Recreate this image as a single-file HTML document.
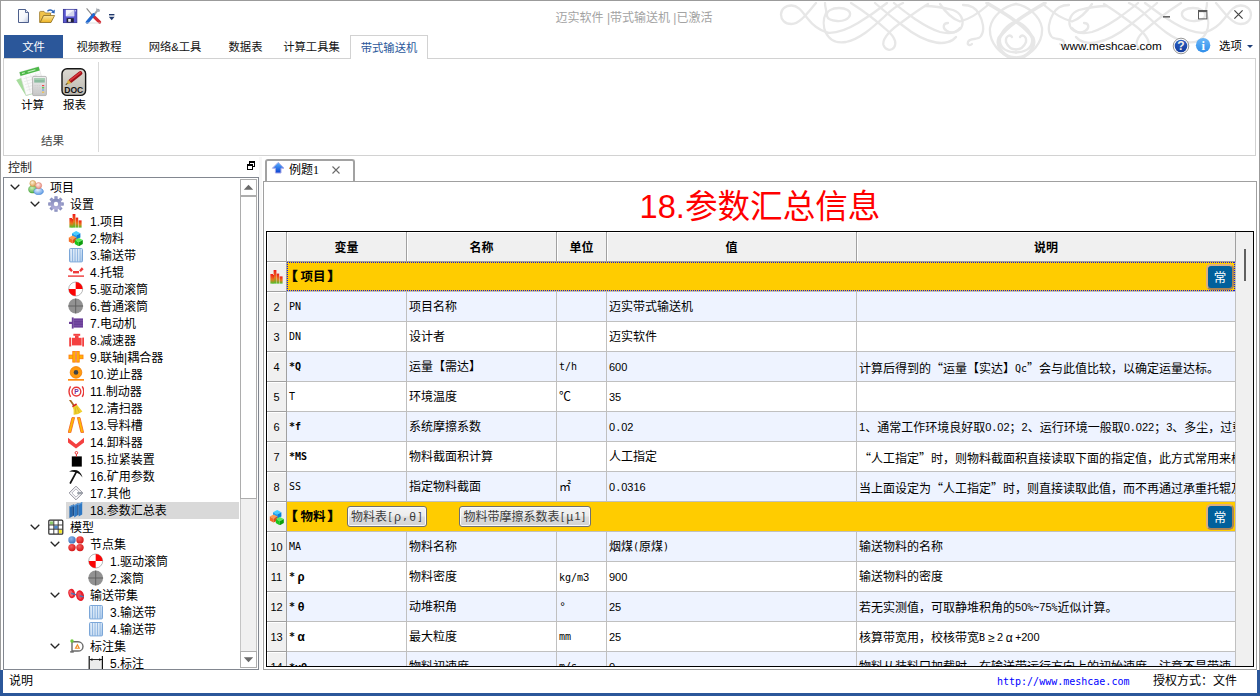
<!DOCTYPE html>
<html lang="zh-CN"><head><meta charset="utf-8"><title>迈实软件 |带式输送机 |已激活</title>
<style>
*{box-sizing:border-box;margin:0;padding:0}
html,body{width:1260px;height:696px;overflow:hidden;background:#fff}
body{position:relative;font-family:"Liberation Sans","Noto Sans CJK SC",sans-serif;font-size:12px;color:#000;line-height:1}
.abs{position:absolute}
.t{position:absolute;white-space:nowrap;line-height:16px;height:16px}
#win{position:absolute;left:0;top:0;width:1260px;height:696px;border:1px solid #9b9b9b;}
#title{left:4px;width:1260px;top:10px;text-align:center;color:#a3a3a3;font-size:12px}
.tab{position:absolute;top:35px;height:24px;line-height:25px;text-align:center;font-size:11.3px;color:#111;white-space:nowrap}
#filetab{left:4px;width:59px;top:35px;height:23px;background:#2b579a;color:#fff}
#acttab{left:350px;width:78px;top:35px;height:24px;border:1px solid #d2d2d2;border-bottom:none;background:#fff;color:#2b579a;z-index:3}
#ribbon{left:3px;top:58px;width:1253px;height:98px;border:1px solid #d2d2d2;background:#fff}
#ribsep{left:98px;top:62px;width:1px;height:90px;background:#d9d9d9}
#tree{left:3px;top:177px;width:256px;height:493px;border:1px solid #828790;background:#fff;overflow:hidden}
.row{position:absolute;left:0;height:17px;line-height:16px;white-space:nowrap;font-size:12px}
.row .tx{position:absolute;top:1px}
.chev{position:absolute;width:10px;height:6px}
.ic{position:absolute;width:16px;height:16px}
#sel{left:62px;top:324px;width:173px;height:17px;background:#d9d9d9}
#vsb{left:236px;top:1px;width:17px;height:489px;background:#fff}
.sbb{position:absolute;left:0;width:17px;height:17px;background:#fff;border:1px solid #adadad}
#splitter{left:259px;top:157px;width:3px;height:513px;background:#f7f7f7}
#doctab{left:265px;top:159px;width:90px;height:22px;border:2px solid #a2a2a2;border-bottom:none;background:#fff;border-radius:3px 3px 0 0;z-index:2}
#docpane{left:263px;top:181px;width:994px;height:489px;border:1px solid #a0a0a0;background:#fff}
#bigtitle{left:263px;width:994px;top:187px;height:40px;line-height:40px;text-align:center;font-size:32.6px;color:#ff0000;white-space:nowrap}
#grid{left:266px;top:231px;width:988px;height:436px;border:1px solid #000;background:#f0f0f0;overflow:hidden}
.cell{position:absolute;height:30px;line-height:32px;border-right:1px solid #c0c0c0;border-bottom:1px solid #c0c0c0;white-space:nowrap;overflow:hidden;font-family:"Liberation Mono","Noto Sans CJK SC",monospace;font-size:12px;padding-left:2px;color:#000}
.hd{background:#f0f0f0;text-align:center;font-weight:bold;line-height:34px;box-shadow:inset 1px 1px 0 #fff;border-right:1px solid #a0a0a0;border-bottom:1px solid #a0a0a0;padding-left:0}
.rn{background:#f0f0f0;text-align:center;padding-left:0;box-shadow:inset 1px 1px 0 #fff;border-right:1px solid #a0a0a0;border-bottom:1px solid #a0a0a0;font-size:12px}
.alt{background:#eef3ff}
.wh{background:#fff}
.yl{position:absolute;height:30px;background:#ffcc00;left:20px;width:949px;border-bottom:1px solid #c0c0c0;border-right:1px solid #c0c0c0}
.l{font-family:"DejaVu Sans Mono","Liberation Mono",monospace;font-size:10px;position:relative;top:-1px}
.d{font-family:"Liberation Sans",sans-serif;font-size:11px;position:relative;top:-1px}
.db{font-family:"Liberation Sans",sans-serif;font-size:11px;font-weight:bold;position:relative;top:-1px}
.q{font-family:"Noto Sans CJK SC",sans-serif;font-feature-settings:"fwid"}
.g{display:inline-block;width:12px;text-align:center}
.btn .g{width:9px}
.lb{font-family:"DejaVu Sans Mono","Liberation Mono",monospace;font-size:10px;font-weight:bold;position:relative;top:-1px}
.btn .l{letter-spacing:0}
.btn{position:absolute;height:21px;line-height:21px;border:1px solid #707070;border-radius:3px;background:linear-gradient(#f4f4f4 0%,#ececec 48%,#dedede 52%,#d2d2d2 100%);font-family:"Liberation Mono","Noto Sans CJK SC",monospace;font-size:12px;color:#3c3c3c;padding:0;text-align:center;white-space:nowrap;box-shadow:inset 0 0 0 1px #fafafa}
.chang{position:absolute;left:939px;width:28px;height:26px;border:2px solid;border-color:#dcae80 #a88458 #a88458 #dcae80;border-radius:5px;background:#00609c;color:#fff;text-align:center;line-height:24px;font-size:12.5px;font-family:"Liberation Sans","Noto Sans CJK SC",sans-serif}
.foc{background:repeating-linear-gradient(90deg,#1414e6 0 1px,transparent 1px 2px) 0 0/100% 1px no-repeat,repeating-linear-gradient(90deg,#1414e6 0 1px,transparent 1px 2px) 0 100%/100% 1px no-repeat,repeating-linear-gradient(0deg,#1414e6 0 1px,transparent 1px 2px) 0 0/1px 100% no-repeat,repeating-linear-gradient(0deg,#1414e6 0 1px,transparent 1px 2px) 100% 0/1px 100% no-repeat}
#status{left:0;top:670px;width:1260px;height:26px;border:3px solid #2b579a;border-top:none;background:#fff}
</style></head>
<body>

<svg width="0" height="0" style="position:absolute"><defs>
<linearGradient id="gBars" x1="0" y1="0" x2="0" y2="1"><stop offset="0" stop-color="#f01818"/><stop offset=".55" stop-color="#e8781c"/><stop offset="1" stop-color="#4fc02a"/></linearGradient>
<linearGradient id="gGear" x1="0" y1="0" x2="0" y2="1"><stop offset="0" stop-color="#8088b8"/><stop offset="1" stop-color="#b4b0dc"/></linearGradient>
<linearGradient id="gBelt" x1="0" y1="0" x2="0" y2="1"><stop offset="0" stop-color="#d4e4f6"/><stop offset="1" stop-color="#a8c8ea"/></linearGradient>
<linearGradient id="gFold" x1="0" y1="0" x2="0" y2="1"><stop offset="0" stop-color="#fbe7a0"/><stop offset="1" stop-color="#eeb21e"/></linearGradient>
<linearGradient id="gPage" x1="0" y1="0" x2="1" y2="1"><stop offset="0" stop-color="#ffffff"/><stop offset=".6" stop-color="#f4f6fb"/><stop offset="1" stop-color="#b9c4dc"/></linearGradient>
<linearGradient id="gInfo" x1="0" y1="0" x2="0" y2="1"><stop offset="0" stop-color="#6ab6f8"/><stop offset="1" stop-color="#2f8eea"/></linearGradient>
<linearGradient id="gHelp" x1="0" y1="0" x2="0" y2="1"><stop offset="0" stop-color="#2a60c4"/><stop offset="1" stop-color="#143c9c"/></linearGradient>
<linearGradient id="gUp" x1="0" y1="0" x2="0" y2="1"><stop offset="0" stop-color="#5ab4ff"/><stop offset="1" stop-color="#0a3fd0"/></linearGradient>
<linearGradient id="gDoc" x1="0" y1="0" x2="0" y2="1"><stop offset="0" stop-color="#dcd9d2"/><stop offset="1" stop-color="#bdb9b0"/></linearGradient>
<linearGradient id="gCalc" x1="0" y1="0" x2="0" y2="1"><stop offset="0" stop-color="#f0f0f0"/><stop offset="1" stop-color="#c4c4c4"/></linearGradient>
<radialGradient id="gHeadA" cx=".4" cy=".35" r=".7"><stop offset="0" stop-color="#fdf0d8"/><stop offset="1" stop-color="#d8a050"/></radialGradient>
<radialGradient id="gHeadB" cx=".4" cy=".35" r=".7"><stop offset="0" stop-color="#fff0ec"/><stop offset="1" stop-color="#e88878"/></radialGradient>
<radialGradient id="gBodyA" cx=".4" cy=".3" r=".8"><stop offset="0" stop-color="#c8f0b8"/><stop offset="1" stop-color="#48a838"/></radialGradient>
<radialGradient id="gBodyB" cx=".4" cy=".3" r=".8"><stop offset="0" stop-color="#e4f0ff"/><stop offset="1" stop-color="#4a8ee0"/></radialGradient>
<radialGradient id="gRed" cx=".4" cy=".35" r=".7"><stop offset="0" stop-color="#f86060"/><stop offset="1" stop-color="#d01010"/></radialGradient>
<radialGradient id="gBlu" cx=".4" cy=".35" r=".7"><stop offset="0" stop-color="#8ab4e8"/><stop offset="1" stop-color="#3a70b8"/></radialGradient>
</defs></svg>
<div id="win"></div>
<svg class="abs" style="left:770px;top:2px" width="488" height="56" viewBox="770 2 488 56"><g fill="none" stroke="#e7e7e7" stroke-width="2.3" stroke-linecap="round"><g><path d="M816 3C808 12 800 24 791.5 24C784.5 24 781 19.5 781 14.5C781 9.5 785 5.5 791.5 5.5C799 5.5 803 13 808 19C813 25.5 819 30 827 32.5"/><path d="M825 3C825 8 827 11 826 13C823 19 823 27 826 33C830 41 838 43.5 846 42C860 39 872 28 884 17C890 11 896 6 903 3"/><path d="M827 16C826 11 832 8 839 8C846 8 851 11 850 15C849 19 843 21.5 837 21C831 20.5 827.500 19 827 16Z"/><path d="M826 32.5C836 34 848 29 858 23C868 17 878 10 887 3"/><path d="M851 3C862 10 878 22 889 32C894 37 897 43 894 47.5C891 51.5 885 50 883.5 45C882 39 890 30 902 22C910 16 920 9 928 4"/><path d="M875 3C883 10 893 18 902 25C910 31.5 922 40 936 42.5C944 44 952 42 956 37"/><path d="M894 3C901 9 908 14 915 19C921 23 930 29 940 32C948 34 956 33 960 28"/><path d="M925 6C935 6 945 8 953 10C961 13 964 20 962 26C960 32 952 34 947 31C942 28 943 23 948 23"/><path d="M963 5C970 5 976 8 979 14C983 21 985 30 981 36C978 41 970 37 968 42C967 45 970 46 972 44"/><path d="M940 4C944 10 950 18 960 21.5C970 19 980 12 988 5"/><path d="M1016 4C1004 6 992 16 990 28C989 42 1000 57 1016 57.5"/><path d="M1016 21C1006 25 999 34 1000 42C1001 49 1008 52.5 1016 52.5"/><path d="M1006 42C1005 36 1010 34 1012 37"/><path d="M1006 42C1008 47 1012 49.5 1016 49.5"/><path d="M987 3C1000 11 1024 24 1033 38C1036 46 1030 54 1022 57.5" stroke-width="3.4"/></g><g transform="translate(2032 0) scale(-1 1)"><path d="M816 3C808 12 800 24 791.5 24C784.5 24 781 19.5 781 14.5C781 9.5 785 5.5 791.5 5.5C799 5.5 803 13 808 19C813 25.5 819 30 827 32.5"/><path d="M825 3C825 8 827 11 826 13C823 19 823 27 826 33C830 41 838 43.5 846 42C860 39 872 28 884 17C890 11 896 6 903 3"/><path d="M827 16C826 11 832 8 839 8C846 8 851 11 850 15C849 19 843 21.5 837 21C831 20.5 827.500 19 827 16Z"/><path d="M826 32.5C836 34 848 29 858 23C868 17 878 10 887 3"/><path d="M851 3C862 10 878 22 889 32C894 37 897 43 894 47.5C891 51.5 885 50 883.5 45C882 39 890 30 902 22C910 16 920 9 928 4"/><path d="M875 3C883 10 893 18 902 25C910 31.5 922 40 936 42.5C944 44 952 42 956 37"/><path d="M894 3C901 9 908 14 915 19C921 23 930 29 940 32C948 34 956 33 960 28"/><path d="M925 6C935 6 945 8 953 10C961 13 964 20 962 26C960 32 952 34 947 31C942 28 943 23 948 23"/><path d="M963 5C970 5 976 8 979 14C983 21 985 30 981 36C978 41 970 37 968 42C967 45 970 46 972 44"/><path d="M940 4C944 10 950 18 960 21.5C970 19 980 12 988 5"/><path d="M1016 4C1004 6 992 16 990 28C989 42 1000 57 1016 57.5"/><path d="M1016 21C1006 25 999 34 1000 42C1001 49 1008 52.5 1016 52.5"/><path d="M1006 42C1005 36 1010 34 1012 37"/><path d="M1006 42C1008 47 1012 49.5 1016 49.5"/><path d="M987 3C1000 11 1024 24 1033 38C1036 46 1030 54 1022 57.5" stroke-width="3.4"/></g></g></svg>
<svg class="abs" style="left:16px;top:6px" width="104" height="20" viewBox="16 6 104 20"><path d="M18.5 9.5 H25.5 L28.5 12.5 V22.5 H18.5Z" fill="url(#gPage)" stroke="#4d5f8c" stroke-width="1"/><path d="M25.5 9.5 V12.5 H28.5" fill="#dfe5f2" stroke="#4d5f8c" stroke-width=".9"/><path d="M39.6 22.4 V12.2 Q39.6 11.4 40.4 11.4 H44 L45.4 13 H50.6 V15.4 H43.6 L40.4 22.4Z" fill="#f1c34a" stroke="#9a7a2c" stroke-width=".8"/><path d="M40.2 22.5 L43.6 15.5 H54.6 L51 22.5Z" fill="url(#gFold)" stroke="#8c6c20" stroke-width=".8"/><path d="M47.4 11.2 Q50.6 8.6 53.4 11.6" fill="none" stroke="#2a62b8" stroke-width="1.3"/><path d="M54.8 9.6 L54.6 13.4 L51 12.4Z" fill="#2a62b8"/><rect x="63.4" y="9.4" width="13.4" height="13.2" fill="#5a58d0" stroke="#3a389c" stroke-width=".9"/><rect x="65.8" y="9.8" width="8.4" height="6.4" fill="#f4f4fb"/><path d="M65.8 16.2 L74.2 9.8 V16.2Z" fill="#d4d6ee"/><rect x="66.6" y="18.2" width="7.2" height="4.2" fill="#22223a"/><rect x="68.2" y="19" width="2.6" height="2.8" fill="#f0f0f0"/><rect x="75" y="10.2" width="1" height="1.2" fill="#d0d0f0"/><path d="M86.6 8.4 L93.4 16.6" stroke="#8a8a8a" stroke-width="1.1"/><path d="M92.6 15.4 L99.6 22.2" stroke="#d42c34" stroke-width="3.2" stroke-linecap="round"/><path d="M98.6 9 L94.6 14.2" stroke="#9aa0a8" stroke-width="2"/><path d="M96 7.6 L97.6 10 L100.2 9.6 L99.4 12 L96.4 11.6Z" fill="#aab0b8"/><path d="M93.6 14.8 L87.2 22.2" stroke="#1f68d0" stroke-width="3.2" stroke-linecap="round"/><path d="M86 23 H100.6" stroke="#d8d8d8" stroke-width=".8"/><rect x="109" y="14" width="5.4" height="1.4" fill="#20386c"/><path d="M108.8 16.8 H114.6 L111.7 20.2Z" fill="#20386c"/></svg>
<div class="t" id="title">迈实软件 |带式输送机 |已激活</div>
<svg class="abs" style="left:1155px;top:4px" width="100" height="24" viewBox="1155 4 100 24"><rect x="1163" y="16" width="7" height="1.6" fill="#666"/><rect x="1198.5" y="10.5" width="8.4" height="8.4" fill="none" stroke="#5a5a5a" stroke-width="1"/><rect x="1198.5" y="10.5" width="8.4" height="1.6" fill="#5a5a5a"/><path d="M1234.4 10.4 L1242.6 18.6 M1242.6 10.4 L1234.4 18.6" stroke="#444" stroke-width="1.2"/></svg>
<div class="tab" id="filetab">文件</div>
<div class="tab" style="left:66px;width:66px">视频教程</div>
<div class="tab" style="left:137px;width:76px">网络&amp;工具</div>
<div class="tab" style="left:218px;width:55px">数据表</div>
<div class="tab" style="left:273px;width:77px">计算工具集</div>
<div class="tab" id="acttab">带式输送机</div>
<div class="t" style="left:1061px;top:38px;font-size:11.7px;color:#000">www.meshcae.com</div>
<svg class="abs" style="left:1172px;top:37px" width="40" height="18" viewBox="1172 37 40 18"><circle cx="1181" cy="46" r="7.8" fill="#fff" stroke="#8a8a8a" stroke-width=".9"/><circle cx="1181" cy="46" r="6.3" fill="url(#gHelp)"/><text x="1181" y="50.4" text-anchor="middle" font-family="Liberation Sans,sans-serif" font-weight="bold" font-size="12" fill="#f4f0e6">?</text><circle cx="1203.1" cy="45.2" r="7.2" fill="url(#gInfo)"/><text x="1203.2" y="49.8" text-anchor="middle" font-family="Liberation Serif,serif" font-weight="bold" font-size="12.5" fill="#fff">i</text></svg>
<div class="t" style="left:1219px;top:38px;font-size:11.4px">选项</div>
<div class="abs" style="left:1247px;top:45px;width:0;height:0;border-left:3px solid transparent;border-right:3px solid transparent;border-top:3px solid #1e3e78"></div>
<div class="abs" id="ribbon"></div>
<div class="abs" id="ribsep"></div>
<svg class="abs" style="left:14px;top:64px" width="76" height="34" viewBox="14 64 76 34"><path d="M16.2 80 L27 75.4 L33.6 93.8 L26 96Z" fill="#a6dc9c"/><g transform="rotate(-16 30 80)"><rect x="22" y="69.6" width="20" height="24" fill="#fbfbfb" stroke="#d8d8d8" stroke-width=".5"/><rect x="22" y="69.6" width="20" height="4" fill="#4cb848"/><path d="M24 71.6h3M30 71.6h8" stroke="#c8f0c0" stroke-width="1"/><path d="M24 77h17M24 80h17M24 83h17M24 86h17M24 89h17M27 75v17M32 75v17M37 75v17" stroke="#e4e4e4" stroke-width=".6"/></g><rect x="32.6" y="76.4" width="13.8" height="19.2" rx="1.2" fill="url(#gCalc)" stroke="#a8a8a8" stroke-width=".8"/><rect x="34.2" y="78.2" width="10.6" height="4.4" fill="#8cbca0"/><rect x="34.2" y="78.2" width="10.6" height="1.6" fill="#a8d0b4"/><rect x="42" y="85" width="2.2" height="1.2" fill="#f04848"/><rect x="42" y="87.2" width="2.2" height="1.2" fill="#48c048"/><rect x="42" y="89.4" width="2.2" height="1.2" fill="#68a0e8"/><rect x="42" y="91.6" width="2.2" height="1.2" fill="#f0c048"/><path d="M34.4 85.6h6.4M34.4 87.8h6.4M34.4 90h6.4M34.4 92.2h6.4" stroke="#d0d0d0" stroke-width="1" stroke-dasharray="1.4 .8"/><rect x="62" y="68.8" width="23.6" height="26.6" rx="5" fill="url(#gDoc)" stroke="#161616" stroke-width="1.4"/><path d="M80.4 73.2 L70.6 80.8" stroke="#a01018" stroke-width="4" stroke-linecap="round"/><path d="M80.2 72.6 L70.4 80.2" stroke="#d83840" stroke-width="1.6" stroke-linecap="round"/><path d="M68.2 79.6 L71.4 83 L65.8 85Z" fill="#d8b040"/><path d="M65.8 85 l1.6 -2" stroke="#222" stroke-width=".8"/><text x="73.8" y="93.2" text-anchor="middle" font-family="Liberation Sans,sans-serif" font-weight="bold" font-size="8.6" fill="#111" textLength="19" lengthAdjust="spacingAndGlyphs">DOC</text></svg>
<div class="t" style="left:21px;top:97px;font-size:11.6px">计算</div>
<div class="t" style="left:63px;top:97px;font-size:11.6px">报表</div>
<div class="t" style="left:41px;top:133px;color:#444;font-size:11.6px">结果</div>
<div class="t" style="left:8px;top:160px;color:#222">控制</div>
<svg class="abs" style="left:246px;top:160px" width="11" height="11" viewBox="246 160 11 11"><rect x="249.5" y="161.5" width="5" height="5" fill="#fff" stroke="#000" stroke-width="1"/><rect x="249" y="161" width="6" height="2" fill="#000"/><rect x="247.5" y="164.5" width="5" height="5" fill="#fff" stroke="#000" stroke-width="1"/><rect x="247" y="164" width="6" height="2" fill="#000"/></svg>
<div class="abs" id="tree">
<div class="abs" id="sel"></div>
<div class="row" style="top:1px;width:236px"><svg class="chev" style="left:6px;top:5px" viewBox="0 0 10 6"><path d="M0.7 0.7 L5 5 L9.3 0.7" fill="none" stroke="#262626" stroke-width="1.3"/></svg><svg class="ic" style="left:24px;top:0px" viewBox="0 0 16 16"><g transform="translate(0 0.4)"><ellipse cx="4.8" cy="10" rx="4.2" ry="3.6" fill="url(#gBodyA)" stroke="#3c9a30" stroke-width=".5"/><circle cx="4.8" cy="4" r="3" fill="url(#gHeadA)" stroke="#c89040" stroke-width=".5"/><ellipse cx="10.6" cy="12" rx="4.8" ry="3.4" fill="url(#gBodyB)" stroke="#3c7cd0" stroke-width=".5"/><circle cx="10.6" cy="6.2" r="3.1" fill="url(#gHeadB)" stroke="#d87868" stroke-width=".5"/></g></svg><span class="tx" style="left:46px">项目</span></div>
<div class="row" style="top:18px;width:236px"><svg class="chev" style="left:26px;top:5px" viewBox="0 0 10 6"><path d="M0.7 0.7 L5 5 L9.3 0.7" fill="none" stroke="#262626" stroke-width="1.3"/></svg><svg class="ic" style="left:44px;top:0px" viewBox="0 0 16 16"><g transform="translate(8 8)" fill="url(#gGear)"><rect x="-1.7" y="-7.8" width="3.4" height="4" rx=".6" transform="rotate(0)"/><rect x="-1.7" y="-7.8" width="3.4" height="4" rx=".6" transform="rotate(45)"/><rect x="-1.7" y="-7.8" width="3.4" height="4" rx=".6" transform="rotate(90)"/><rect x="-1.7" y="-7.8" width="3.4" height="4" rx=".6" transform="rotate(135)"/><rect x="-1.7" y="-7.8" width="3.4" height="4" rx=".6" transform="rotate(180)"/><rect x="-1.7" y="-7.8" width="3.4" height="4" rx=".6" transform="rotate(225)"/><rect x="-1.7" y="-7.8" width="3.4" height="4" rx=".6" transform="rotate(270)"/><rect x="-1.7" y="-7.8" width="3.4" height="4" rx=".6" transform="rotate(315)"/><circle r="5.6"/></g><circle cx="8" cy="8" r="2.2" fill="#fff"/></svg><span class="tx" style="left:66px">设置</span></div>
<div class="row" style="top:35px;width:236px"><svg class="ic" style="left:64px;top:0px" viewBox="0 0 16 16"><g fill="url(#gBars)"><rect x="1.4" y="5" width="2.6" height="9.6"/><rect x="4.6" y="1" width="2.8" height="13.6"/><rect x="3.6" y="6" width="1.4" height="8.6"/><rect x="7.6" y="4.6" width="2.6" height="10"/><rect x="10.6" y="7.4" width="3" height="7.2"/></g></svg><span class="tx" style="left:86px">1.项目</span></div>
<div class="row" style="top:52px;width:236px"><svg class="ic" style="left:64px;top:0px" viewBox="0 0 16 16"><g transform="translate(0 -0.3)"><path d="M8.2 1.2 l4.2 2.3 l-4.2 2.3 l-4.2 -2.3 z" fill="#48ccff"/><path d="M4.0 3.5 l4.2 2.3 v4.2 l-4.2 -2.3 z" fill="#18a0f4"/><path d="M12.4 3.5 l-4.2 2.3 v4.2 l4.2 -2.3 z" fill="#0880d8"/><path d="M4.6 5.8 l3.8 2.1 l-3.8 2.1 l-3.8 -2.1 z" fill="#ff9c50"/><path d="M0.8 7.9 l3.8 2.1 v3.8 l-3.8 -2.1 z" fill="#f46c24"/><path d="M8.4 7.9 l-3.8 2.1 v3.8 l3.8 -2.1 z" fill="#dc4c14"/><path d="M10.8 8.2 l4.0 2.2 l-4.0 2.2 l-4.0 -2.2 z" fill="#58ec58"/><path d="M6.8 10.4 l4.0 2.2 v4.0 l-4.0 -2.2 z" fill="#1cc41c"/><path d="M14.8 10.4 l-4.0 2.2 v4.0 l4.0 -2.2 z" fill="#0c9c0c"/></g></svg><span class="tx" style="left:86px">2.物料</span></div>
<div class="row" style="top:69px;width:236px"><svg class="ic" style="left:64px;top:0px" viewBox="0 0 16 16"><rect x="1.5" y="1.5" width="13" height="13.4" rx="1" fill="url(#gBelt)" stroke="#7aa6d8" stroke-width="1"/><path d="M4.5 2v12.4M7 2v12.4M9.5 2v12.4M12 2v12.4" stroke="#8fb4e0" stroke-width=".9"/><path d="M3.3 2v12.4M5.8 2v12.4M8.3 2v12.4M10.8 2v12.4" stroke="#eef5fc" stroke-width=".7"/></svg><span class="tx" style="left:86px">3.输送带</span></div>
<div class="row" style="top:86px;width:236px"><svg class="ic" style="left:64px;top:0px" viewBox="0 0 16 16"><g fill="#ee3a3a"><rect x="5" y="7" width="6" height="2.4"/><path d="M0.4 5.2 L2.2 3.2 L4.8 6.4 L3.2 8 Z"/><path d="M15.6 5.2 L13.8 3.2 L11.2 6.4 L12.8 8 Z"/><rect x="0" y="11.4" width="16" height="1.4"/></g></svg><span class="tx" style="left:86px">4.托辊</span></div>
<div class="row" style="top:103px;width:236px"><svg class="ic" style="left:64px;top:0px" viewBox="0 0 16 16"><circle cx="7.7" cy="8" r="7" fill="#fff" stroke="#9a9a9a" stroke-width=".7"/><path d="M7.7 8 V1 A7 7 0 0 1 14.7 8 Z" fill="#fa0505"/><path d="M7.7 8 V15 A7 7 0 0 1 0.7 8 Z" fill="#fa0505"/></svg><span class="tx" style="left:86px">5.驱动滚筒</span></div>
<div class="row" style="top:120px;width:236px"><svg class="ic" style="left:64px;top:0px" viewBox="0 0 16 16"><circle cx="7.7" cy="8" r="7.4" fill="#929292"/><path d="M7.7 .6 V15.4 M.3 8 H15.1" stroke="#5e5e5e" stroke-width=".9"/></svg><span class="tx" style="left:86px">6.普通滚筒</span></div>
<div class="row" style="top:137px;width:236px"><svg class="ic" style="left:64px;top:0px" viewBox="0 0 16 16"><g transform="translate(0 0.8)"><g fill="#6a3e98"><rect x="5.4" y="2.6" width="9.6" height="9.2"/><rect x="3.8" y="1.6" width="1.8" height="11.2"/><rect x="1" y="6" width="3" height="2.2"/></g><path d="M6 4.6h9M6 7.2h9M6 9.8h9" stroke="#7e54aa" stroke-width=".8"/></g></svg><span class="tx" style="left:86px">7.电动机</span></div>
<div class="row" style="top:154px;width:236px"><svg class="ic" style="left:64px;top:0px" viewBox="0 0 16 16"><g transform="translate(0 -0.8)"><g fill="#f44040"><rect x="4" y="6.6" width="9.6" height="7.6"/><rect x="5.4" y="2.6" width="6.8" height="2"/><rect x="7" y="4.4" width="3.6" height="2.4"/><rect x="1.2" y="6.4" width="2" height="9" rx=".4"/><rect x="14.2" y="6.4" width="2" height="9" rx=".4"/></g></g></svg><span class="tx" style="left:86px">8.减速器</span></div>
<div class="row" style="top:171px;width:236px"><svg class="ic" style="left:64px;top:0px" viewBox="0 0 16 16"><g transform="translate(0 0.5)"><rect x="1" y="5.6" width="14" height="3.6" fill="#ffb400" stroke="#ff7e10" stroke-width=".9"/><rect x="4.8" y="2" width="2.6" height="10.6" fill="#ffb400" stroke="#ff7e10" stroke-width=".9"/><rect x="8.6" y="2" width="2.6" height="10.6" fill="#ffb400" stroke="#ff7e10" stroke-width=".9"/><rect x="7.5" y="2.4" width="1" height="9.8" fill="#e89090"/></g></svg><span class="tx" style="left:86px">9.联轴|耦合器</span></div>
<div class="row" style="top:188px;width:236px"><svg class="ic" style="left:64px;top:0px" viewBox="0 0 16 16"><circle cx="8" cy="6.4" r="5.8" fill="#ff9a10" stroke="#f07c00" stroke-width=".8"/><circle cx="8" cy="6.4" r="2.3" fill="#404448"/><rect x="0" y="13" width="16" height="1.7" fill="#ff8c10"/></svg><span class="tx" style="left:86px">10.逆止器</span></div>
<div class="row" style="top:205px;width:236px"><svg class="ic" style="left:64px;top:0px" viewBox="0 0 16 16"><g transform="translate(0 1)"><circle cx="8.4" cy="7.6" r="4.4" fill="#fff" stroke="#e83838" stroke-width="1.4"/><path d="M2.6 2.4 Q-.6 7.6 2.6 12.8 M14.2 2.4 Q17.4 7.6 14.2 12.8" fill="none" stroke="#e83838" stroke-width="1.4"/><text x="8.5" y="10.1" font-family="Liberation Sans,sans-serif" font-weight="bold" font-size="6.6" text-anchor="middle" fill="#7030a0">P</text></g></svg><span class="tx" style="left:86px">11.制动器</span></div>
<div class="row" style="top:222px;width:236px"><svg class="ic" style="left:64px;top:0px" viewBox="0 0 16 16"><g transform="translate(0 -0.8)"><path d="M2 .8 L6.4 7" stroke="#a86820" stroke-width="1.8" stroke-linecap="round"/><path d="M4.6 7.6 L8.6 5 L14.4 12.4 Q10 16 5.6 15.6 Q6.4 11 4.6 7.6Z" fill="#f0d030"/><path d="M7.2 8.2 L8 14.8 M8.6 7.4 L11.4 13.8" stroke="#c8a818" stroke-width=".6"/><path d="M4.4 7.4 L8.6 4.8" stroke="#d82020" stroke-width="1.5"/></g></svg><span class="tx" style="left:86px">12.清扫器</span></div>
<div class="row" style="top:239px;width:236px"><svg class="ic" style="left:64px;top:0px" viewBox="0 0 16 16"><path d="M4 0.6 L6.6 0.6 L2.8 15.6 L0.2 15.6Z" fill="#ffc000" stroke="#f46a28" stroke-width=".9"/><path d="M9.4 0.6 L12 0.6 L15.6 15.6 L13 15.6Z" fill="#ffc000" stroke="#f46a28" stroke-width=".9"/></svg><span class="tx" style="left:86px">13.导料槽</span></div>
<div class="row" style="top:256px;width:236px"><svg class="ic" style="left:64px;top:0px" viewBox="0 0 16 16"><path d="M0 3.8 L8 10.2 L16 3.8 V8.4 L8 14.6 L0 8.4Z" fill="#f44040"/></svg><span class="tx" style="left:86px">14.卸料器</span></div>
<div class="row" style="top:273px;width:236px"><svg class="ic" style="left:64px;top:0px" viewBox="0 0 16 16"><rect x="3.8" y="5.4" width="10" height="10.2" fill="#000"/><circle cx="8.4" cy="1.8" r="1.3" fill="none" stroke="#e82020" stroke-width=".9"/><path d="M8.4 3.2V5.6" stroke="#e82020" stroke-width="1"/></svg><span class="tx" style="left:86px">15.拉紧装置</span></div>
<div class="row" style="top:290px;width:236px"><svg class="ic" style="left:64px;top:0px" viewBox="0 0 16 16"><path d="M2.4 15 L8.4 3.8" stroke="#111" stroke-width="1.7" stroke-linecap="round"/><path d="M1 3.4 Q7 .6 11 3.4 Q13.6 5.6 14.6 9.4 Q12 5.6 8.4 4.6 Q5 3.4 1 3.4Z" fill="#111"/></svg><span class="tx" style="left:86px">16.矿用参数</span></div>
<div class="row" style="top:307px;width:236px"><svg class="ic" style="left:64px;top:0px" viewBox="0 0 16 16"><path d="M8 1.2 L14.8 8 L8 14.8 L1.2 8Z" fill="#fff" stroke="#8c8c98" stroke-width="1"/><path d="M8 3.8 L12.2 8 L8 12.2 L3.8 8Z" fill="none" stroke="#a8a8b4" stroke-width=".9"/><path d="M9.6 7 h4.4 v2.2 h-4.4 q-1.2 -1.1 0 -2.2z" fill="#9aa0a8"/></svg><span class="tx" style="left:86px">17.其他</span></div>
<div class="row" style="top:324px;width:236px"><svg class="ic" style="left:64px;top:0px" viewBox="0 0 16 16"><g><path d="M1.4 4.6 L4.2 3 V14.4 L1.4 16Z" fill="#2668ae"/><path d="M4.2 3 L6.2 2.2 V13.6 L4.2 14.4Z" fill="#1a4e8c"/><path d="M6.2 3.4 L9.2 1.6 V13.6 L6.2 15.4Z" fill="#2e78c4"/><path d="M9.2 1.6 L10.6 1.2 V12.8 L9.2 13.6Z" fill="#1a4e8c"/><path d="M10.6 2 L14.2 0 V12.6 L10.6 14.6Z" fill="#2e78c4"/><path d="M1.4 4.6 L4.2 3 L6.2 3.4 L9.2 1.6 L10.6 2 L14.2 0 V1.2 L10.6 3.2 L9.2 2.8 L6.2 4.6 L4.2 4.2 L1.4 5.8Z" fill="#5a9ada"/></g></svg><span class="tx" style="left:86px">18.参数汇总表</span></div>
<div class="row" style="top:341px;width:236px"><svg class="chev" style="left:26px;top:5px" viewBox="0 0 10 6"><path d="M0.7 0.7 L5 5 L9.3 0.7" fill="none" stroke="#262626" stroke-width="1.3"/></svg><svg class="ic" style="left:44px;top:0px" viewBox="0 0 16 16"><rect x=".8" y="1.2" width="14" height="14" rx="1" fill="#fff" stroke="#2c2c2c" stroke-width="1.2"/><rect x="2" y="2.4" width="3.4" height="3.2" fill="#8cc86a"/><rect x="6.2" y="6.6" width="3.6" height="3.2" fill="#4a86d0"/><rect x="10.8" y="10.6" width="3" height="3.6" fill="#f4e820"/><path d="M5.8 1.6V15M10.2 1.6V15M1 6H14.6M1 10.2H14.6" stroke="#2c2c2c" stroke-width=".9"/></svg><span class="tx" style="left:66px">模型</span></div>
<div class="row" style="top:358px;width:236px"><svg class="chev" style="left:46px;top:5px" viewBox="0 0 10 6"><path d="M0.7 0.7 L5 5 L9.3 0.7" fill="none" stroke="#262626" stroke-width="1.3"/></svg><svg class="ic" style="left:64px;top:0px" viewBox="0 0 16 16"><circle cx="4" cy="3.9" r="3.7" fill="url(#gBlu)"/><circle cx="12" cy="3.9" r="3.7" fill="url(#gRed)"/><circle cx="4" cy="11.6" r="3.7" fill="url(#gRed)"/><circle cx="12" cy="11.6" r="3.7" fill="url(#gRed)"/></svg><span class="tx" style="left:86px">节点集</span></div>
<div class="row" style="top:375px;width:236px"><svg class="ic" style="left:84px;top:0px" viewBox="0 0 16 16"><circle cx="7.7" cy="8" r="7" fill="#fff" stroke="#9a9a9a" stroke-width=".7"/><path d="M7.7 8 V1 A7 7 0 0 1 14.7 8 Z" fill="#fa0505"/><path d="M7.7 8 V15 A7 7 0 0 1 0.7 8 Z" fill="#fa0505"/></svg><span class="tx" style="left:106px">1.驱动滚筒</span></div>
<div class="row" style="top:392px;width:236px"><svg class="ic" style="left:84px;top:0px" viewBox="0 0 16 16"><circle cx="7.7" cy="8" r="7.4" fill="#929292"/><path d="M7.7 .6 V15.4 M.3 8 H15.1" stroke="#5e5e5e" stroke-width=".9"/></svg><span class="tx" style="left:106px">2.滚筒</span></div>
<div class="row" style="top:409px;width:236px"><svg class="chev" style="left:46px;top:5px" viewBox="0 0 10 6"><path d="M0.7 0.7 L5 5 L9.3 0.7" fill="none" stroke="#262626" stroke-width="1.3"/></svg><svg class="ic" style="left:64px;top:0px" viewBox="0 0 16 16"><ellipse cx="3.7" cy="6.5" rx="3.3" ry="4.7" fill="#e8202c" transform="rotate(-14 3.7 6.5)"/><ellipse cx="3.1" cy="6.4" rx="1.7" ry="3.2" fill="#f4646c" transform="rotate(-14 3.1 6.4)"/><path d="M3.2 6.3 L8.4 7.9" stroke="#4a78b8" stroke-width="1.5"/><ellipse cx="12.1" cy="8.7" rx="3.9" ry="5.4" fill="#e8202c" transform="rotate(-14 12.1 8.7)"/><ellipse cx="11.5" cy="8.6" rx="2" ry="3.8" fill="#ee4a54" transform="rotate(-14 11.5 8.6)"/><path d="M11.6 8.7 L15.6 9.9" stroke="#4a78b8" stroke-width="1.5"/></svg><span class="tx" style="left:86px">输送带集</span></div>
<div class="row" style="top:426px;width:236px"><svg class="ic" style="left:84px;top:0px" viewBox="0 0 16 16"><rect x="1.5" y="1.5" width="13" height="13.4" rx="1" fill="url(#gBelt)" stroke="#7aa6d8" stroke-width="1"/><path d="M4.5 2v12.4M7 2v12.4M9.5 2v12.4M12 2v12.4" stroke="#8fb4e0" stroke-width=".9"/><path d="M3.3 2v12.4M5.8 2v12.4M8.3 2v12.4M10.8 2v12.4" stroke="#eef5fc" stroke-width=".7"/></svg><span class="tx" style="left:106px">3.输送带</span></div>
<div class="row" style="top:443px;width:236px"><svg class="ic" style="left:84px;top:0px" viewBox="0 0 16 16"><rect x="1.5" y="1.5" width="13" height="13.4" rx="1" fill="url(#gBelt)" stroke="#7aa6d8" stroke-width="1"/><path d="M4.5 2v12.4M7 2v12.4M9.5 2v12.4M12 2v12.4" stroke="#8fb4e0" stroke-width=".9"/><path d="M3.3 2v12.4M5.8 2v12.4M8.3 2v12.4M10.8 2v12.4" stroke="#eef5fc" stroke-width=".7"/></svg><span class="tx" style="left:106px">4.输送带</span></div>
<div class="row" style="top:460px;width:236px"><svg class="chev" style="left:46px;top:5px" viewBox="0 0 10 6"><path d="M0.7 0.7 L5 5 L9.3 0.7" fill="none" stroke="#262626" stroke-width="1.3"/></svg><svg class="ic" style="left:64px;top:0px" viewBox="0 0 16 16"><path d="M4 3.8 H10 A5 4.6 0 0 1 10 13 H4" fill="#fff" stroke="#6a6a6a" stroke-width="1.4"/><path d="M4 3 V14.8 M2 13.9 H6" stroke="#6a6a6a" stroke-width="1.4"/><path d="M9.4 5.6 L12.2 10.8 H6.6Z" fill="#f08c28"/><path d="M9.4 8 L10.2 9.7 H8.6Z" fill="#fff"/><circle cx="4" cy="3" r="1.7" fill="#6cc83c"/></svg><span class="tx" style="left:86px">标注集</span></div>
<div class="row" style="top:477px;width:236px"><svg class="ic" style="left:84px;top:0px" viewBox="0 0 16 16"><rect x="1.6" y="6" width="12.4" height="10" fill="#ececec"/><path d="M1.2 1 V16 M14.4 1 V16" stroke="#111" stroke-width="1.2"/><path d="M1.6 4.6 H14" stroke="#111" stroke-width="1"/><path d="M1.8 4.6 L4.4 3.2 V6Z M13.8 4.6 L11.2 3.2 V6Z" fill="#111"/></svg><span class="tx" style="left:106px">5.标注</span></div>
<div class="abs" id="vsb"><div class="sbb" style="top:0"><svg width="15" height="15" viewBox="0 0 15 15" style="position:absolute;left:0;top:0"><path d="M2.8 9.8 L7.5 4.8 L12.2 9.8 Z" fill="#6a6a6a"/></svg></div><div class="abs" style="left:0;top:17px;width:17px;height:303px;background:#fff;border:1px solid #adadad"></div><div class="abs" style="left:0;top:320px;width:17px;height:152px;background:#f0f0f0;border-left:1px solid #c4c4c4;border-right:1px solid #c4c4c4"></div><div class="sbb" style="top:472px"><svg width="15" height="15" viewBox="0 0 15 15" style="position:absolute;left:0;top:0"><path d="M2.8 5.2 L7.5 10.2 L12.2 5.2 Z" fill="#6a6a6a"/></svg></div></div>
</div>
<div class="abs" id="splitter"></div>
<div class="abs" id="docpane"></div>
<div class="abs" id="doctab"></div>
<svg class="abs" style="left:271px;top:161px;z-index:4" width="15" height="14" viewBox="271 161 15 14"><path d="M278.2 162.4 L284 168.2 H281 V173 H275.4 V168.2 H272.4Z" fill="url(#gUp)" stroke="#a8a8e8" stroke-width="1"/></svg>
<div class="t" style="left:289px;top:162px;z-index:4;font-family:'Liberation Sans','Noto Sans CJK SC',sans-serif">例题<span style="font-family:'Liberation Serif',serif">1</span></div>
<svg class="abs" style="left:331px;top:165px;z-index:4" width="10" height="10" viewBox="0 0 10 10"><path d="M1.5 1.5 L8.5 8.5 M8.5 1.5 L1.5 8.5" stroke="#6a6a6a" stroke-width="1.1" fill="none"/></svg>
<div class="abs" id="bigtitle">18.参数汇总信息</div>
<div class="abs" id="grid">
<div class="cell hd" style="left:0px;top:0;width:20px"></div><div class="cell hd" style="left:20px;top:0;width:120px">变量</div><div class="cell hd" style="left:140px;top:0;width:150px">名称</div><div class="cell hd" style="left:290px;top:0;width:50px">单位</div><div class="cell hd" style="left:340px;top:0;width:250px">值</div><div class="cell hd" style="left:590px;top:0;width:379px">说明</div>
<div class="cell rn" style="left:0;top:30px;width:20px"></div><svg class="ic" style="left:2px;top:37px" viewBox="0 0 16 16"><g fill="url(#gBars)"><rect x="1.4" y="5" width="2.6" height="9.6"/><rect x="4.6" y="1" width="2.8" height="13.6"/><rect x="3.6" y="6" width="1.4" height="8.6"/><rect x="7.6" y="4.6" width="2.6" height="10"/><rect x="10.6" y="7.4" width="3" height="7.2"/></g></svg><div class="yl" style="top:30px"></div><div class="t" style="left:25px;top:38px;font-family:'Liberation Mono','Noto Sans CJK SC',monospace;font-weight:bold;font-size:12.5px"><span style="margin-left:-7px;margin-right:3px;-webkit-text-stroke:.6px #000">【</span>项目<span style="margin-left:2px;-webkit-text-stroke:.6px #000">】</span></div><div class="chang" style="top:32px">常</div><div class="abs foc" style="left:20px;top:30px;width:948px;height:29px"></div>
<div class="cell rn" style="left:0;top:60px;width:20px"><span class="d">2</span></div><div class="cell alt" style="left:20px;top:60px;width:120px"><span class="l">PN</span></div><div class="cell alt" style="left:140px;top:60px;width:150px">项目名称</div><div class="cell alt" style="left:290px;top:60px;width:50px"></div><div class="cell alt" style="left:340px;top:60px;width:250px">迈实带式输送机</div><div class="cell alt" style="left:590px;top:60px;width:379px"></div>
<div class="cell rn" style="left:0;top:90px;width:20px"><span class="d">3</span></div><div class="cell wh" style="left:20px;top:90px;width:120px"><span class="l">DN</span></div><div class="cell wh" style="left:140px;top:90px;width:150px">设计者</div><div class="cell wh" style="left:290px;top:90px;width:50px"></div><div class="cell wh" style="left:340px;top:90px;width:250px">迈实软件</div><div class="cell wh" style="left:590px;top:90px;width:379px"></div>
<div class="cell rn" style="left:0;top:120px;width:20px"><span class="d">4</span></div><div class="cell alt" style="left:20px;top:120px;width:120px"><b><span class="lb">*Q</span></b></div><div class="cell alt" style="left:140px;top:120px;width:150px">运量【需达】</div><div class="cell alt" style="left:290px;top:120px;width:50px"><span class="l">t/h</span></div><div class="cell alt" style="left:340px;top:120px;width:250px"><span class="d">600</span></div><div class="cell alt" style="left:590px;top:120px;width:379px">计算后得到的<span class="q">“</span>运量【实达】<span class="l">Qc</span><span class="q">”</span>会与此值比较，以确定运量达标。</div>
<div class="cell rn" style="left:0;top:150px;width:20px"><span class="d">5</span></div><div class="cell wh" style="left:20px;top:150px;width:120px"><span class="l">T</span></div><div class="cell wh" style="left:140px;top:150px;width:150px">环境温度</div><div class="cell wh" style="left:290px;top:150px;width:50px">℃</div><div class="cell wh" style="left:340px;top:150px;width:250px"><span class="d">35</span></div><div class="cell wh" style="left:590px;top:150px;width:379px"></div>
<div class="cell rn" style="left:0;top:180px;width:20px"><span class="d">6</span></div><div class="cell alt" style="left:20px;top:180px;width:120px"><b><span class="lb">*f</span></b></div><div class="cell alt" style="left:140px;top:180px;width:150px">系统摩擦系数</div><div class="cell alt" style="left:290px;top:180px;width:50px"></div><div class="cell alt" style="left:340px;top:180px;width:250px"><span class="d">0</span><span class="l">.</span><span class="d">02</span></div><div class="cell alt" style="left:590px;top:180px;width:379px"><span class="d">1</span>、通常工作环境良好取<span class="d">0</span><span class="l">.</span><span class="d">02</span>；<span class="d">2</span>、运行环境一般取<span class="d">0</span><span class="l">.</span><span class="d">022</span>；<span class="d">3</span>、多尘，过载，低温取<span class="d">0</span><span class="l">.</span><span class="d">023</span><span class="l">~</span><span class="d">0</span><span class="l">.</span><span class="d">03</span></div>
<div class="cell rn" style="left:0;top:210px;width:20px"><span class="d">7</span></div><div class="cell wh" style="left:20px;top:210px;width:120px"><b><span class="lb">*MS</span></b></div><div class="cell wh" style="left:140px;top:210px;width:150px">物料截面积计算</div><div class="cell wh" style="left:290px;top:210px;width:50px"></div><div class="cell wh" style="left:340px;top:210px;width:250px">人工指定</div><div class="cell wh" style="left:590px;top:210px;width:379px"><span class="q">“</span>人工指定<span class="q">”</span>时，则物料截面积直接读取下面的指定值，此方式常用来校核现有设备</div>
<div class="cell rn" style="left:0;top:240px;width:20px"><span class="d">8</span></div><div class="cell alt" style="left:20px;top:240px;width:120px"><span class="l">SS</span></div><div class="cell alt" style="left:140px;top:240px;width:150px">指定物料截面</div><div class="cell alt" style="left:290px;top:240px;width:50px">㎡</div><div class="cell alt" style="left:340px;top:240px;width:250px"><span class="d">0</span><span class="l">.</span><span class="d">0316</span></div><div class="cell alt" style="left:590px;top:240px;width:379px">当上面设定为<span class="q">“</span>人工指定<span class="q">”</span>时，则直接读取此值，而不再通过承重托辊及带宽计算</div>
<div class="cell rn" style="left:0;top:270px;width:20px"></div><svg class="ic" style="left:2px;top:277px" viewBox="0 0 16 16"><g transform="translate(0 -0.3)"><path d="M8.2 1.2 l4.2 2.3 l-4.2 2.3 l-4.2 -2.3 z" fill="#48ccff"/><path d="M4.0 3.5 l4.2 2.3 v4.2 l-4.2 -2.3 z" fill="#18a0f4"/><path d="M12.4 3.5 l-4.2 2.3 v4.2 l4.2 -2.3 z" fill="#0880d8"/><path d="M4.6 5.8 l3.8 2.1 l-3.8 2.1 l-3.8 -2.1 z" fill="#ff9c50"/><path d="M0.8 7.9 l3.8 2.1 v3.8 l-3.8 -2.1 z" fill="#f46c24"/><path d="M8.4 7.9 l-3.8 2.1 v3.8 l3.8 -2.1 z" fill="#dc4c14"/><path d="M10.8 8.2 l4.0 2.2 l-4.0 2.2 l-4.0 -2.2 z" fill="#58ec58"/><path d="M6.8 10.4 l4.0 2.2 v4.0 l-4.0 -2.2 z" fill="#1cc41c"/><path d="M14.8 10.4 l-4.0 2.2 v4.0 l4.0 -2.2 z" fill="#0c9c0c"/></g></svg><div class="yl" style="top:270px"></div><div class="t" style="left:25px;top:278px;font-family:'Liberation Mono','Noto Sans CJK SC',monospace;font-weight:bold;font-size:12.5px"><span style="margin-left:-7px;margin-right:3px;-webkit-text-stroke:.6px #000">【</span>物料<span style="margin-left:2px;-webkit-text-stroke:.6px #000">】</span></div><div class="btn" style="left:80px;top:274px;width:80px">物料表<span class="l">[</span><span class="g">ρ</span><span class="l">,</span><span class="g">θ</span><span class="l">]</span></div><div class="btn" style="left:192px;top:274px;width:132px">物料带摩擦系数表<span class="l">[</span><span class="g">μ</span><span class="d">1</span><span class="l">]</span></div><div class="chang" style="top:272px">常</div>
<div class="cell rn" style="left:0;top:300px;width:20px"><span class="d">10</span></div><div class="cell alt" style="left:20px;top:300px;width:120px"><span class="l">MA</span></div><div class="cell alt" style="left:140px;top:300px;width:150px">物料名称</div><div class="cell alt" style="left:290px;top:300px;width:50px"></div><div class="cell alt" style="left:340px;top:300px;width:250px">烟煤<span class="l">(</span>原煤<span class="l">)</span></div><div class="cell alt" style="left:590px;top:300px;width:379px">输送物料的名称</div>
<div class="cell rn" style="left:0;top:330px;width:20px"><span class="d">11</span></div><div class="cell wh" style="left:20px;top:330px;width:120px"><b><span class="lb">*</span><span class="g">ρ</span></b></div><div class="cell wh" style="left:140px;top:330px;width:150px">物料密度</div><div class="cell wh" style="left:290px;top:330px;width:50px"><span class="l">kg/m</span><span class="d">3</span></div><div class="cell wh" style="left:340px;top:330px;width:250px"><span class="d">900</span></div><div class="cell wh" style="left:590px;top:330px;width:379px">输送物料的密度</div>
<div class="cell rn" style="left:0;top:360px;width:20px"><span class="d">12</span></div><div class="cell alt" style="left:20px;top:360px;width:120px"><b><span class="lb">*</span><span class="g">θ</span></b></div><div class="cell alt" style="left:140px;top:360px;width:150px">动堆积角</div><div class="cell alt" style="left:290px;top:360px;width:50px">°</div><div class="cell alt" style="left:340px;top:360px;width:250px"><span class="d">25</span></div><div class="cell alt" style="left:590px;top:360px;width:379px">若无实测值，可取静堆积角的<span class="d">50</span><span class="l">%~</span><span class="d">75</span><span class="l">%</span>近似计算。</div>
<div class="cell rn" style="left:0;top:390px;width:20px"><span class="d">13</span></div><div class="cell wh" style="left:20px;top:390px;width:120px"><b><span class="lb">*</span><span class="g">α</span></b></div><div class="cell wh" style="left:140px;top:390px;width:150px">最大粒度</div><div class="cell wh" style="left:290px;top:390px;width:50px"><span class="l">mm</span></div><div class="cell wh" style="left:340px;top:390px;width:250px"><span class="d">25</span></div><div class="cell wh" style="left:590px;top:390px;width:379px">核算带宽用，校核带宽<span class="l">B</span><span class="g">≥</span><span class="d">2</span><span class="g">α</span><span class="l">+</span><span class="d">200</span></div>
<div class="cell rn" style="left:0;top:420px;width:20px"><span class="d">14</span></div><div class="cell alt" style="left:20px;top:420px;width:120px"><b><span class="lb">*v</span><span class="db">0</span></b></div><div class="cell alt" style="left:140px;top:420px;width:150px">物料初速度</div><div class="cell alt" style="left:290px;top:420px;width:50px"><span class="l">m/s</span></div><div class="cell alt" style="left:340px;top:420px;width:250px"><span class="d">0</span></div><div class="cell alt" style="left:590px;top:420px;width:379px">物料从装料口加载时，在输送带运行方向上的初始速度，注意不是带速</div>
<div class="abs" style="left:969px;top:0;width:17px;height:434px;background:#f0f0f0"></div><div class="abs" style="left:977px;top:17px;width:2px;height:32px;background:#606060"></div>
</div>
<div class="abs" id="status"></div>
<div class="t" style="left:9px;top:673px">说明</div>
<div class="t" style="left:997px;top:674px;color:#0000ff;font-family:'DejaVu Sans Mono','Liberation Mono',monospace;font-size:10px">http://www.meshcae.com</div>
<div class="t" style="left:1153px;top:673px">授权方式：文件</div>
</body></html>
